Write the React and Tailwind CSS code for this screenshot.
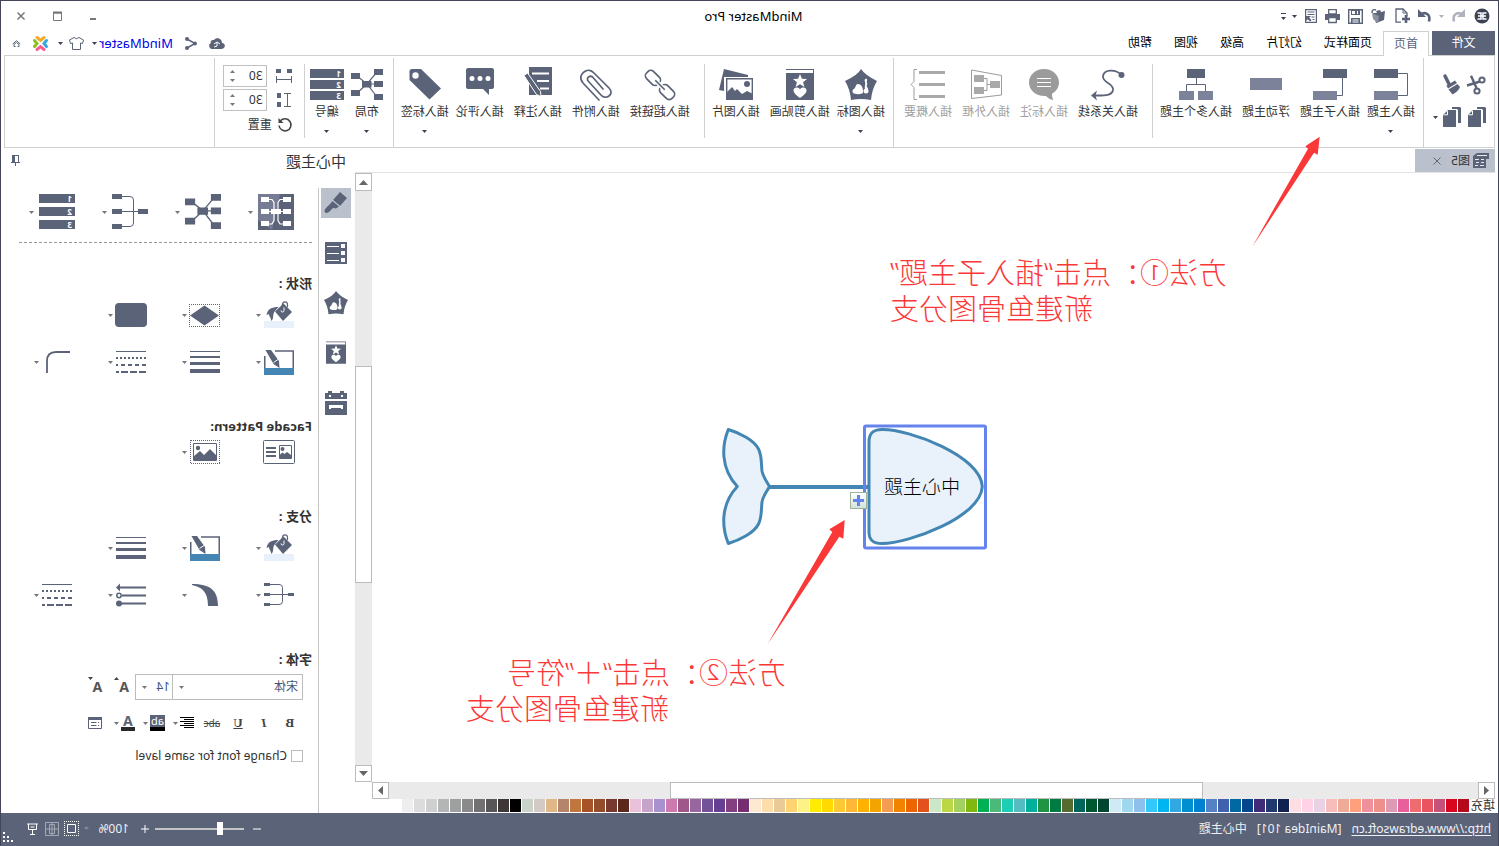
import React, { useState } from 'react';

const DARK = '#5b6378';
const LIGHT = '#7d829b';
const GRAY = '#9b9b9b';

const TABS = ['首页', '页面样式', '幻灯片', '高级', '视图', '帮助'];

const SWATCHES = [
  '#b50a1b', '#d9071d', '#c85178', '#ea5460', '#ee6b70', '#e85f9b', '#e099b5', '#ee8f8c', '#f0909c', '#ff9f7c',
  '#f0ab98', '#f6bdbb', '#ead2e6', '#ffd2e5', '#ffdee3', '#10224f', '#203a70', '#402c76', '#04468c', '#0068a2',
  '#4061ad', '#5482c4', '#0080d2', '#0090d2', '#30a9e3', '#00b6f2', '#32c8fa', '#8dc0ea', '#9fd8ee', '#cfeaf5',
  '#004530', '#005830', '#00665c', '#566c2e', '#007c42', '#1f9442', '#00b09c', '#55bdc2', '#1dcdb4', '#4ab97a',
  '#00b054', '#80b810', '#a4d060', '#bcd744', '#cce6c8', '#e4511e', '#ed6500', '#f28300', '#f49b54', '#f4a400',
  '#ffb000', '#ffb835', '#fac934', '#ffd900', '#ffec00', '#fdf286', '#ffd372', '#eacb98', '#ffdcab', '#fde8d2',
  '#772e70', '#833f80', '#673f92', '#74529a', '#97669f', '#a0578a', '#cc7ab0', '#a991d0', '#c6a4c9', '#eac1db',
  '#5d291a', '#773a30', '#934d2b', '#a85228', '#c0773f', '#b4846b', '#e0b888', '#d3cac5', '#c9d3ca', '#000000',
  '#3f3737', '#585656', '#717171', '#8a8a8a', '#9ea09f', '#b4b6b5', '#cecfcf', '#dcdcdc', '#eeeeee',
];

const Svg = ({ w, h, vb, children, className = '' }) => (
  <svg
    width={w}
    height={h}
    viewBox={vb || `0 0 ${w} ${h}`}
    fill="none"
    className={`shrink-0 overflow-visible ${className}`}
    aria-hidden="true"
  >
    {children}
  </svg>
);

const Caret = ({ color = '#777777' }) => (
  <Svg w={5} h={3}><path d="M0 0h5L2.5 3z" fill={color} /></Svg>
);

/* ---------- title bar icons ---------- */

const LogoIcon = () => (
  <Svg w={16} h={16}>
    <circle cx="8" cy="8" r="7.5" fill="#3d4254" />
    <path d="M3.500 5H7v6H3.500M12.500 5H9v6h3.500M4 8h8" stroke="#fff" strokeWidth="1.5" />
  </Svg>
);
const UndoIcon = ({ color = DARK, flip }) => (
  <Svg w={14} h={14}>
    <g transform={flip ? 'translate(14 0) scale(-1 1)' : undefined}>
      <path d="M1 5.500C6 1 13 3 11 11.500" transform="translate(0 1)" stroke={color} strokeWidth="2.600" />
      <path d="M0 0v8h8z" fill={color} />
    </g>
  </Svg>
);
const NewIcon = () => (
  <Svg w={16} h={16}>
    <path d="M9 14.200h5V1H7L3 5v3.500" stroke={DARK} strokeWidth="1.300" />
    <path d="M7 1v4H3" stroke={DARK} />
    <path d="M0 11h8M4 7v8" stroke={DARK} strokeWidth="2.600" />
  </Svg>
);
const OpenIcon = () => (
  <Svg w={15} h={15}>
    <path d="M1 2l4 1 1-2 4 1-1 2 4 0-3 10-8-3z" fill={DARK} />
    <path d="M7 7l7-3-1 6-5 4z" fill="#8d92a3" />
    <path d="M10 1c3-1 4 0 4 3" stroke={DARK} strokeWidth="1.5" />
  </Svg>
);
const SaveIcon = () => (
  <Svg w={15} h={15}>
    <path d="M.7.700h13.600v13.600H.7z" stroke={DARK} strokeWidth="1.400" />
    <path d="M3 1h9v5H3zM3 9h9v6H3z" fill={DARK} />
    <path d="M5 2h1v3H5zM8 2h3v3H8zM4.500 10.500h6v1h-6zM4.500 12.500h6v1h-6z" fill="#fff" />
  </Svg>
);
const PrintIcon = () => (
  <Svg w={15} h={14}>
    <path d="M0 5h15v6H0z" fill={DARK} />
    <path d="M3.700.700h7.600V5H3.700zM3.700 8.500h7.600v5H3.700z" fill="#fff" stroke={DARK} strokeWidth="1.300" />
  </Svg>
);
const ExportIcon = () => (
  <Svg w={12} h={14}>
    <path d="M.6.600h10.800v12.800H.6z" stroke={DARK} strokeWidth="1.200" />
    <path d="M2.500 3h7M2.500 5.500h7M2.500 8h3M2.500 10.500h2" stroke={DARK} />
    <path d="M6 7h5v5l-1.700-1.700L7 12.500 5.500 11l2.300-2.300z" fill={DARK} />
  </Svg>
);

/* ---------- ribbon icons ---------- */

const ScissorsIcon = () => (
  <Svg w={20} h={20}>
    <circle cx="4" cy="5" r="2.600" stroke={DARK} strokeWidth="2" />
    <circle cx="9" cy="16" r="2.600" stroke={DARK} strokeWidth="2" />
    <path d="M6 6.500l13 4M9.500 13L15 .8" stroke={DARK} strokeWidth="2.400" />
  </Svg>
);
const BrushIcon = () => (
  <Svg w={18} h={20}>
    <path d="M16 1l-4 8" stroke={DARK} strokeWidth="3.500" strokeLinecap="round" />
    <path d="M6 5.500l8.500 5-1.500 3-9-5.500z" fill={DARK} />
    <path d="M3.500 9l9 5.500-4 5C5 18 2 15 1 12z" fill={DARK} />
  </Svg>
);
const CopyIcon = () => (
  <Svg w={18} h={20}>
    <path d="M1 0h8v2H4l-1 1v13H0V1z" fill={DARK} />
    <path d="M5 3h8l5 5v12H5z" fill={DARK} />
    <path d="M13.500 3.800v4h4" stroke="#fff" />
  </Svg>
);
const TopicIcon = () => (
  <Svg w={34} h={32}>
    <path d="M10 4.500H.5V26.500H10" stroke={DARK} />
    <path d="M10 0h24v9H10z" fill={DARK} />
    <path d="M10 22h24v9H10z" fill={LIGHT} />
  </Svg>
);
const SubtopicIcon = () => (
  <Svg w={34} h={32}>
    <path d="M4.500 9v17.500H10" stroke={DARK} />
    <path d="M0 0h24v9H0z" fill={DARK} />
    <path d="M10 22h24v9H10z" fill={LIGHT} />
  </Svg>
);
const FloatIcon = () => (
  <Svg w={32} h={32}><path d="M0 9h32v12H0z" fill={LIGHT} /></Svg>
);
const MultiIcon = () => (
  <Svg w={34} h={32}>
    <path d="M16.500 9v6.500M7.500 22v-6.500h19V22" stroke={DARK} />
    <path d="M8 0h18v9H8z" fill={DARK} />
    <path d="M0 22h15v9H0zM19 22h15v9H19z" fill={LIGHT} />
  </Svg>
);
const RelationIcon = () => (
  <Svg w={34} h={32}>
    <circle cx="3.500" cy="6" r="3" fill={DARK} />
    <path d="M3.500 6C9 0 21 0 22 7c1 7-11 7-10 14 1 6 9 5.500 18 5.500" stroke={DARK} strokeWidth="1.800" />
    <path d="M34 26.500l-6-5 1.500 5-1.500 5z" fill={DARK} />
  </Svg>
);
const CalloutIcon = () => (
  <Svg w={32} h={32}>
    <path d="M16 0C7.500 0 1 6 1 13.500c0 5 3 9 7 11.300 0 3-.5 5-1.500 6.200 3.500-.5 6-2.200 7.500-4.100 10 .6 17-5.600 17-13.400C31 6 24.500 0 16 0z" fill={GRAY} />
    <path d="M9 9.500h14M9 13.500h14M9 17.500h14" stroke="#fff" />
  </Svg>
);
const FrameIcon = () => (
  <Svg w={32} h={32}>
    <path d="M.5 6.500L30.500 1v28.500L.500 26z" stroke={GRAY} />
    <path d="M2 12h10v7H2zM18 6h10v7H18zM18 18h10v7H18z" fill="#a9a9a9" />
    <path d="M12 15.500h3M18 9.500h-3v12h3" stroke={GRAY} />
  </Svg>
);
const SummaryIcon = () => (
  <Svg w={34} h={32}>
    <path d="M0 2h26v3H0zM0 14h26v3H0zM0 26h26v3H0z" fill="#a9a9a9" />
    <path d="M28 .5h3v12l3 3-3 3v12h-3" stroke={GRAY} />
  </Svg>
);
const PentagonIcon = ({ size = 32 }) => (
  <Svg w={size} h={size} vb="0 0 32 32">
    <path d="M16 0q3 6 16 12-5 8-6 19-10-2-20 0Q5 20 0 12 12 6 16 0z" fill={DARK} />
    <path d="M14 22c0-4 2-7 5-7 2.500 0 2 3.500 4 5 2 .5 2 4 0 4.500-3 1-6 1-8 0-1.500-.7-1-1.500-1-2.500zM10 10c2-1 3 1 2 3s1 4 0 7c-1 2-3 2-3 0s2-2 1-4 1-3 0-4z" fill="#fff" />
    <circle cx="11" cy="22" r="2.500" fill="#fff" />
  </Svg>
);
const ClipartIcon = ({ w = 28, h = 32 }) => (
  <Svg w={w} h={h} vb="0 0 28 32">
    <path d="M0 0h28v1H1v3h27v27H0z" fill={DARK} />
    <path d="M14 5l1.900 4.700 5.100.3-3.900 3.200 1.300 4.800-4.400-2.700L9.600 18l1.300-4.800L7 10l5.100-.3z" fill="#fff" />
    <path d="M14 29c-4-3-6.500-5-6.500-7.500 0-3.500 5-4 6.500-1 1.500-3 6.500-2.500 6.500 1C20.500 24 18 26 14 29z" fill="#fff" />
  </Svg>
);
const PictureIcon = () => (
  <Svg w={34} h={32}>
    <path d="M29 0l5 21-5 1V8H5L5 6z" fill={DARK} />
    <path d="M.7 9.700h25.600v20.600H.7z" fill="#fff" stroke={DARK} strokeWidth="1.400" />
    <circle cx="6" cy="15" r="3" fill={DARK} />
    <path d="M0 25l6-3 5 3 5-5 2 2 3-4 6 6v7H0z" fill={DARK} />
  </Svg>
);
const LinkIcon = () => (
  <Svg w={32} h={32}>
    <g stroke={DARK} strokeWidth="1.700" transform="rotate(-45 16 16)">
      <rect x="-2" y="11" width="16" height="10" rx="4" />
      <rect x="18" y="11" width="16" height="10" rx="4" />
      <path d="M10 16h12" strokeWidth="4.500" stroke="#fff" />
      <path d="M10 16h12" strokeLinecap="round" />
    </g>
  </Svg>
);
const ClipIcon = () => (
  <Svg w={32} h={32}>
    <path
      d="M13 31L29 14c4-5 2-9-1-11-3-2.500-7-2-10 1L3 19c-3 3-2.500 6 0 8s6 1.500 8-1l12-13c2-2 2-4 .5-5s-3.500-1-5 1L9 20"
      stroke={DARK}
      strokeWidth="1.700"
      strokeLinecap="round"
    />
  </Svg>
);
const NoteIcon = () => (
  <Svg w={30} h={32}>
    <path d="M1 -2h23v28H1z" fill={DARK} />
    <path d="M4 4.500h17M4 12h12M4 19.500h9" stroke="#fff" strokeWidth="2" />
    <path d="M25.500 4l3.500 2.500-12.500 19-4.500 2 .5-5z" fill={DARK} stroke="#fff" />
  </Svg>
);
const ReviewIcon = () => (
  <Svg w={28} h={32}>
    <path d="M2-1h24c1 0 2 1 2 2v17c0 1-1 2-2 2H11l-6 6v-6H2c-1 0-2-1-2-2V1c0-1 1-2 2-2z" fill={DARK} />
    <circle cx="6" cy="9.500" r="2.500" fill="#fff" />
    <circle cx="14" cy="9.500" r="2.500" fill="#fff" />
    <circle cx="22" cy="9.500" r="2.500" fill="#fff" />
  </Svg>
);
const TagIcon = () => (
  <Svg w={32} h={32}>
    <path d="M20 0h9c1.500 0 2.500 1 2.500 2.500V11L11.500 30.500 0 19.500z" fill={DARK} />
    <circle cx="25.500" cy="6.500" r="3.200" fill="#fff" />
  </Svg>
);
const LayoutIcon = ({ size = 32 }) => (
  <Svg w={size} h={size} vb="0 0 32 32">
    <path d="M6 3l10 12L26 7M6 28l10-13 10 9M6 15h10" stroke={DARK} strokeWidth="1.200" />
    <path d="M0 0h9v6H0zM0 12h9v6H0zM0 25h9v6H0zM23 4h9v6h-9zM23 21h9v6h-9zM11.500 12h9.500v6.500h-9.500z" fill={DARK} />
  </Svg>
);
const NumberIcon = ({ w = 34, h = 32, step = 11 }) => (
  <Svg w={w} h={h}>
    {['1', '2', '3'].map((n, i) => (
      <g key={n} transform={`translate(0 ${i * step})`}>
        <path d={`M0 0h${w}v9H0z`} fill={DARK} />
        <text x="3" y="7.500" fontSize="8" fontWeight="700" fill="#fff">{n}</text>
      </g>
    ))}
  </Svg>
);
const HSpaceIcon = () => (
  <Svg w={16} h={14}>
    <path d="M0 0h5v4H0zM11 0h5v4h-5z" fill={DARK} />
    <path d="M.5 7v7M15.500 7v7M.5 10.500h15" stroke={DARK} />
  </Svg>
);
const VSpaceIcon = () => (
  <Svg w={14} h={15}>
    <path d="M10 0h4v5h-4zM10 9h4v5h-4z" fill={DARK} />
    <path d="M0 .5h7M0 13.500h7M3.500.5v13" stroke={DARK} />
  </Svg>
);

/* ---------- side panel icons ---------- */

const ThemeIcon = () => (
  <Svg w={36} h={36}>
    <path d="M0 0h36v36H0z" fill={DARK} />
    <path d="M14 0h22v26L22 36z" fill={LIGHT} opacity=".8" />
    <path d="M11 5.500l3 0 2 3v18l-2 3.500h-3M25 5.500h-3l-2 3v18l2 3.500h3M8 17.500h20" stroke="#fff" strokeWidth="1.200" />
    <path d="M3 3h8v5H3zM3 15h8v5H3zM3 27h8v5H3zM25 3h8v5h-8zM25 15h8v5h-8zM25 27h8v5h-8zM13 15h10v5H13z" fill="#fff" />
  </Svg>
);
const TreeIcon = () => (
  <Svg w={36} h={36}>
    <path d="M10 17.500h16M26 2.500h-8q-3.500 0-3.500 3.500v23q0 3.500 3.500 3.500h8" stroke={DARK} />
    <path d="M0 15h10v5H0zM26 0h10v5H26zM26 15h10v5H26zM26 30h10v5H26z" fill={DARK} />
  </Svg>
);
const FillIcon = () => (
  <Svg w={30} h={26}>
    <path d="M0 19h30v7H0z" fill="#e7f0fb" />
    <path d="M2 10L10.500 1.500 19 9.500 11 19z" fill={DARK} />
    <path d="M6.500 5V2.500c0-3.500 4.500-3.500 5-.5l.5 3" stroke={DARK} strokeWidth="1.200" />
    <path d="M10 5.500v3q0 1.500 1.500 1.500t1.500-1.500" stroke="#fff" />
    <path d="M15.500 5c7 0 11 2 12 8l-2.500-1c0 2-1.500 3-2.500 7-3-3-.5-7-3.500-10z" fill={DARK} />
  </Svg>
);
const DiamondIcon = () => (
  <Svg w={31} h={23}>
    <path d="M0 .5h31M0 22.500h31M.5 0v23M30.500 0v23" stroke={DARK} strokeDasharray="1 1" />
    <path d="M15.500 1.500L30 11.500l-14.500 10L1 11.500z" fill={DARK} />
  </Svg>
);
const RoundRectIcon = () => (
  <Svg w={32} h={24}><rect width="32" height="24" rx="4" fill={DARK} /></Svg>
);
const LineColorIcon = () => (
  <Svg w={30} h={25}>
    <path d="M.75 18V1H19M29.250 6v12" stroke={DARK} strokeWidth="1.500" />
    <path d="M0 18h30v7H0z" fill="#4585b3" />
    <path d="M23 0h5.500L20.500 14l-6 4 .5-7z" fill={DARK} />
    <path d="M16 9.500l4.500 3" stroke="#fff" />
  </Svg>
);
const WeightIcon = () => (
  <Svg w={30} h={22}>
    <path d="M0 0h30v1H0zM0 5h30v2H0zM0 11h30v3H0zM0 18h30v4H0z" fill={DARK} />
  </Svg>
);
const DashIcon = () => (
  <Svg w={30} h={22}>
    <path d="M0 .5h30" stroke={DARK} />
    <path d="M0 7h30" stroke={DARK} strokeWidth="2" strokeDasharray="2 2" />
    <path d="M0 14h30" stroke={DARK} strokeWidth="2" strokeDasharray="4 3" />
    <path d="M0 21h30" stroke={DARK} strokeWidth="2" strokeDasharray="7 2" />
  </Svg>
);
const CornerIcon = () => (
  <Svg w={30} h={22}>
    <path d="M2 1h14q9 0 9 9v12" stroke={DARK} strokeWidth="1.800" />
  </Svg>
);
const TextPicIcon = () => (
  <Svg w={32} h={24}>
    <rect x=".5" y=".5" width="31" height="23" rx="1" stroke={DARK} />
    <path d="M3.500 5.500h12v13h-12z" stroke={DARK} />
    <circle cx="12.500" cy="9" r="2" fill={DARK} />
    <path d="M4 15l4-3 2.500 2 2-1.500 3 2.500v3.500H4zM19 7h10v2H19zM19 11h10v2H19zM19 15h10v2H19z" fill={DARK} />
  </Svg>
);
const PicIcon = () => (
  <Svg w={30} h={24}>
    <path d="M0 .5h30M0 23.500h30M.5 0v24M29.500 0v24" stroke={DARK} strokeDasharray="1 1" />
    <path d="M3.500 3.500h23v17h-23z" stroke={DARK} />
    <circle cx="22" cy="8" r="2.200" fill={DARK} />
    <path d="M4 15l6-6 6 6 4-4 6 5v5H4z" fill={DARK} />
  </Svg>
);
const SmallTreeIcon = () => (
  <Svg w={30} h={24}>
    <path d="M5 11.500h20M25 1.500H15q-3.500 0-3.500 3v14q0 3 3.500 3h10" stroke={DARK} />
    <path d="M0 10h6v3H0zM24 0h6v3h-6zM24 10h6v3h-6zM24 20h6v3h-6z" fill={DARK} />
  </Svg>
);
const TaperIcon = () => (
  <Svg w={30} h={22}>
    <path d="M28 0C10 0 2 6 2 22h10C12 8 18 3 28 1z" fill={DARK} />
  </Svg>
);
const ArrowsIcon = () => (
  <Svg w={30} h={22}>
    <path d="M0 3.500h27M0 11.500h24M0 19.500h27" stroke={DARK} strokeWidth="2" />
    <path d="M30 3.500L26-.5v8z" fill={DARK} />
    <circle cx="27" cy="11.500" r="2.200" stroke={DARK} strokeWidth="1.500" />
    <circle cx="27" cy="19.500" r="3" fill={DARK} />
  </Svg>
);
const PaintbrushIcon = () => (
  <Svg w={24} h={24}>
    <path d="M8 1l7 8-7 6-7-8z" fill={DARK} />
    <path d="M9 15.500l6.500-5.500 2 2.500 4 4c4 4 1 7-2.500 4.500l-4-4-3 .5z" fill={DARK} />
    <path d="M8 15.500L15.500 9" stroke="#bbc0cd" />
  </Svg>
);
const OutlineIcon = () => (
  <Svg w={22} h={22}>
    <path d="M0 0h22v22H0z" fill={DARK} />
    <path d="M2 2h4v4H2zM2 9h4v4H2zM2 16h4v4H2zM8 4h12v1H8zM8 11h12v1H8zM8 18h12v1H8z" fill="#fff" />
  </Svg>
);
const TaskIcon = () => (
  <Svg w={22} h={22}>
    <path d="M0 1h3V-1h4v2h8v-2h4v2h3v6H0zM0 9h22v14H0z" fill={DARK} />
    <path d="M4 13h14v4h-2v-1H6v1H4z" fill="#fff" />
    <path d="M4 3h2v2H4zM16 3h2v2h-2z" fill="#fff" />
  </Svg>
);

const RibbonButton = ({ icon, label, menu, muted }) => (
  <button
    type="button"
    className={`flex flex-col items-center pt-[13px] ${menu ? 'px-[2px]' : 'px-[5px]'}`}
  >
    {/* icons are drawn a little wider than their two-character labels */}
    <span className="flex h-8 w-0 justify-center">{icon}</span>
    <span className={`mt-[3px] text-xs leading-4 whitespace-nowrap ${muted ? 'text-[#a0a0a0]' : 'text-[#333]'}`}>
      {label}
    </span>
    {menu && <span className="mt-[10px]"><Caret color="#3d4254" /></span>}
  </button>
);

const Divider = ({ full }) => (
  <div className={`w-px shrink-0 bg-[#d0d0d0] ${full ? 'mt-[2px]' : 'mt-2 mb-[9px]'}`} />
);

const Spinner = ({ id, label, value, onChange }) => (
  <div className="flex h-[22px] w-11 items-center border border-[#c0c0c0] pr-[6px] pl-[3px]">
    <input
      id={id}
      aria-label={label}
      inputMode="numeric"
      value={value}
      onChange={(e) => onChange(Number(e.target.value) || 0)}
      className="w-full min-w-0 bg-transparent text-xs text-[#333] outline-none"
    />
    <span className="flex flex-col gap-[6px]">
      <button type="button" aria-label={`${label} +`} onClick={() => onChange(value + 1)} className="rotate-180">
        <Caret />
      </button>
      <button type="button" aria-label={`${label} -`} onClick={() => onChange(value - 1)}>
        <Caret />
      </button>
    </span>
  </div>
);

const TitleBar = () => (
  <header className="grid h-[30px] grid-cols-3 items-center pr-[16px] pl-[8px]">
    <div className="flex items-center gap-[9px]">
      <LogoIcon />
      <div className="flex items-center gap-[7px]">
        <button type="button" aria-label="撤销"><UndoIcon color="#b0b3bc" /></button>
        <Caret color="#b0b3bc" />
        <button type="button" aria-label="恢复"><UndoIcon flip /></button>
      </div>
      <div className="-ml-px flex items-center gap-2">
        <button type="button" aria-label="新建"><NewIcon /></button>
        <button type="button" aria-label="打开"><OpenIcon /></button>
        <button type="button" aria-label="保存"><SaveIcon /></button>
        <button type="button" aria-label="打印"><PrintIcon /></button>
        <button type="button" aria-label="导出"><ExportIcon /></button>
        <span className="flex items-center gap-[6px]">
          <Caret color="#3d4254" />
          <Svg w={5} h={7}><path d="M0 0h5v1H0zM0 4h5L2.500 7z" fill="#3d4254" /></Svg>
        </span>
      </div>
    </div>
    <h1 className="text-center text-[13px] leading-4 text-black">MindMaster Pro</h1>
    <div className="flex items-center justify-end gap-7">
      <button type="button" aria-label="最小化"><Svg w={6} h={10}><path d="M0 7h6v2H0z" fill="#777" /></Svg></button>
      <button type="button" aria-label="最大化"><Svg w={9} h={9}><path d="M.5 1h8v7.500h-8z" stroke="#777" /><path d="M0 .5h9" stroke="#777" strokeWidth="2" /></Svg></button>
      <button type="button" aria-label="关闭"><Svg w={8} h={8}><path d="M.5.500l7 7M7.500.500l-7 7" stroke="#777" strokeWidth="1.500" /></Svg></button>
    </div>
  </header>
);

const TabRow = ({ active, onSelect }) => (
  <nav className="flex h-6 items-end px-[3px] text-xs">
    <button type="button" className="h-6 w-[63px] bg-[#5b6378] text-white">文件</button>
    <div className="ml-[3px] flex">
      {TABS.map((tab) => (
        <button
          key={tab}
          type="button"
          onClick={() => onSelect(tab)}
          className={
            tab === active
              ? 'relative z-10 -mb-px h-[25px] border border-b-0 border-[#d0d0d0] bg-white px-[10px] text-[#5b6378]'
              : 'h-6 px-[11px] text-black'
          }
        >
          {tab}
        </button>
      ))}
    </div>
    <div className="ml-auto flex h-6 items-center pr-2">
      <button type="button" aria-label="云">
        <Svg w={16} h={11}>
          <path d="M4 11C-1 11-1 5 3 5 3 0 9-1 11 2c3-.5 4 2 3 3 3 1 2 6-1 6z" fill={DARK} />
          <path d="M5 6l3-2 3 2M8 4v4l3 1" stroke="#fff" />
        </Svg>
      </button>
      <button type="button" aria-label="分享" className="ml-3">
        <Svg w={12} h={13}>
          <path d="M10 2L2 6.500l8 4.500" stroke={DARK} strokeWidth="1.500" />
          <circle cx="10" cy="2" r="2" fill={DARK} />
          <circle cx="10" cy="11" r="2" fill={DARK} />
          <circle cx="2" cy="6.500" r="2" fill={DARK} />
        </Svg>
      </button>
      <a href="#account" className="ml-3 text-[13px] leading-4 text-[#0000e6]">MindMaster</a>
      <span className="ml-[2px]"><Caret color="#3d4254" /></span>
      <button type="button" aria-label="皮肤" className="ml-2">
        <Svg w={15} h={13}>
          <path d="M5 .5Q7.500 3 10 .5L14.500 3l-1 3.500-2-.5v6.500h-8V6l-2 .5L.5 3z" stroke={DARK} />
        </Svg>
      </button>
      <span className="ml-[6px]"><Caret color="#3d4254" /></span>
      <button type="button" aria-label="社区" className="ml-[10px]">
        <Svg w={15} h={15}>
          <path d="M4 1.500l3.500 2.800L11 1.500" stroke="#f8a72b" strokeWidth="3" strokeLinecap="round" />
          <path d="M4 13.500l3.500-2.800 3.500 2.800" stroke="#f95d8f" strokeWidth="3" strokeLinecap="round" />
          <path d="M1.500 4.500l2.500 3-2.500 3" stroke="#34a9e0" strokeWidth="3" strokeLinecap="round" />
          <path d="M13.500 4.500l-2.500 3 2.500 3" stroke="#8bbf24" strokeWidth="3" strokeLinecap="round" />
        </Svg>
      </button>
      <button type="button" aria-label="收起功能区" className="ml-3">
        <Svg w={9} h={7}><path d="M.7 4L4.500.700 8.300 4M2 4.500L4.500 2.500 7 4.500v2H5.500M2 4.500v2h1.500" stroke={DARK} /></Svg>
      </button>
    </div>
  </nav>
);

const Ribbon = () => {
  const [hGap, setHGap] = useState(30);
  const [vGap, setVGap] = useState(30);

  return (
    <section className="mx-[3px] flex h-[93px] border border-[#d0d0d0]">
      <div className="grid w-[70px] grid-cols-[20px_34px] content-center gap-x-[5px] gap-y-3 pb-px pl-2">
        <button type="button" aria-label="剪切"><ScissorsIcon /></button>
        <button type="button" aria-label="格式刷"><BrushIcon /></button>
        <button type="button" aria-label="复制"><CopyIcon /></button>
        <button type="button" aria-label="粘贴" className="flex items-center gap-[5px]">
          <CopyIcon />
          <Caret color="#3d4254" />
        </button>
      </div>
      <Divider full />
      <div className="flex items-start pr-[2px] pl-[6px]">
        <RibbonButton icon={<TopicIcon />} label="插入主题" menu />
        <RibbonButton icon={<SubtopicIcon />} label="插入子主题" />
        <RibbonButton icon={<FloatIcon />} label="浮动主题" />
        <RibbonButton icon={<MultiIcon />} label="插入多个主题" />
      </div>
      <Divider />
      <div className="flex items-start pr-[5px] pl-[9px]">
        <RibbonButton icon={<RelationIcon />} label="插入关系线" />
        <RibbonButton icon={<CalloutIcon />} label="插入标注" muted />
        <RibbonButton icon={<FrameIcon />} label="插入外框" muted />
        <RibbonButton icon={<SummaryIcon />} label="插入概要" muted />
      </div>
      <Divider full />
      <div className="flex items-start pr-[2px] pl-[6px]">
        <RibbonButton icon={<PentagonIcon />} label="插入图标" menu />
        <RibbonButton icon={<ClipartIcon />} label="插入剪贴画" />
        <RibbonButton icon={<PictureIcon />} label="插入图片" />
      </div>
      <Divider />
      <div className="flex items-start pr-[5px] pl-[9px]">
        <RibbonButton icon={<LinkIcon />} label="插入超链接" />
        <RibbonButton icon={<ClipIcon />} label="插入附件" />
        <RibbonButton icon={<NoteIcon />} label="插入注释" />
        <RibbonButton icon={<ReviewIcon />} label="插入评论" />
        <RibbonButton icon={<TagIcon />} label="插入标签" menu />
      </div>
      <Divider full />
      <div className="flex items-start gap-3 pr-2 pl-3">
        <RibbonButton icon={<LayoutIcon />} label="布局" menu />
        <RibbonButton icon={<NumberIcon />} label="编号" menu />
      </div>
      <Divider />
      <div className="flex flex-col gap-[2px] pt-[9px] pr-2 pl-3">
        <div className="flex items-center gap-[9px]">
          <HSpaceIcon />
          <Spinner id="h-gap" label="水平间距" value={hGap} onChange={setHGap} />
        </div>
        <div className="flex items-center gap-[9px]">
          <span className="flex w-4 justify-center"><VSpaceIcon /></span>
          <Spinner id="v-gap" label="垂直间距" value={vGap} onChange={setVGap} />
        </div>
        <button
          type="button"
          onClick={() => { setHGap(30); setVGap(30); }}
          className="mt-1 flex items-center gap-[6px] text-xs leading-4 text-[#333]"
        >
          <Svg w={14} h={14}>
            <path d="M11.500 2.800A6 6 0 1 0 13 7.500" stroke="#444" strokeWidth="1.600" />
            <path d="M13.500 0v5h-5z" fill="#444" />
          </Svg>
          重置
        </button>
      </div>
      <Divider full />
    </section>
  );
};

const Canvas = () => (
  <main className="relative min-w-0 flex-1 bg-white">
    <svg className="pointer-events-none absolute inset-0 z-10 size-full overflow-visible" fill="none" aria-hidden="true">
      <g transform="translate(-4 -173)">
        <g stroke="#4386b3" strokeWidth="3" fill="#e9f1fb" strokeLinejoin="round">
          <path d="M630 442C630 433 626 429.500 617 429.500C590 429 518 456 516.700 486.500C518 517 590 543.500 617 543.500C626 543.500 630 540 630 532z" />
          <path d="M729.500 486.500C733 480 736 477 737 471C738 462 737 456 740.500 449C745 440 759 433 770.700 429.500C777 445 779 468 761.700 486.500C779 505 777 528 770.700 543.500C759 540 745 533 740.500 524C737 517 738 511 737 502C736 496 733 493 729.500 486.500z" />
          <path d="M631 487h99" strokeWidth="4" />
        </g>
        <rect x="513.500" y="426" width="121" height="122" rx="1.500" stroke="#6583ec" strokeWidth="3" />
        <path d="M179.300 136.700L193.700 146.300 191 148.700 246.700 246.700 185 152.700 181.300 154.700z" fill="#fb3838" />
        <path d="M654.300 520L669.700 529.300 666.700 532 731.300 644 659.700 536.700 655.700 538.700z" fill="#fb3838" />
      </g>
    </svg>
    <span className="absolute top-[302px] left-[535px] z-20 text-[19px] leading-6 font-light text-black">中心主题</span>
    <button
      type="button"
      aria-label="添加子主题"
      className="absolute top-[319px] left-[628px] z-20 flex size-[17px] items-center justify-center border border-[#9db39d] bg-linear-to-b from-white to-[#d3e3d6]"
    >
      <Svg w={11} h={11}><path d="M0 5.500h11M5.500 0v11" stroke="#6583ec" strokeWidth="3" /></Svg>
    </button>
    <div className="absolute top-[82px] left-[268px] text-[29px] leading-9 font-light whitespace-nowrap text-[#fb3838]">
      <p>方法①：点击“插入子主题”</p>
      <p className="pl-[134px]">新建鱼骨图分支</p>
    </div>
    <div className="absolute top-[482px] left-[709px] text-[29px] leading-9 font-light whitespace-nowrap text-[#fb3838]">
      <p>方法②：点击“＋”符号</p>
      <p className="pl-[117px]">新建鱼骨图分支</p>
    </div>
  </main>
);

const VerticalScroll = () => (
  <div className="flex w-[17px] shrink-0 flex-col bg-[#eaeaea]">
    <button type="button" aria-label="向上滚动" className="flex h-[18px] items-center justify-center border border-[#bcbcbc] bg-white">
      <Svg w={9} h={5}><path d="M0 5L4.500 0 9 5z" fill="#666" /></Svg>
    </button>
    <div className="flex-[176]" />
    <div className="flex-[217] border border-[#bcbcbc] bg-white" />
    <div className="flex-[183]" />
    <button type="button" aria-label="向下滚动" className="flex h-[17px] items-center justify-center border border-[#bcbcbc] bg-white">
      <Svg w={9} h={5}><path d="M0 0h9L4.500 5z" fill="#666" /></Svg>
    </button>
  </div>
);

const HorizontalScroll = () => (
  <div className="mr-[17px] flex h-[17px] shrink-0 bg-[#eaeaea]">
    <button type="button" aria-label="向左滚动" className="flex w-[17px] items-center justify-center border border-[#bcbcbc] bg-white">
      <Svg w={5} h={9}><path d="M5 0v9L0 4.500z" fill="#666" /></Svg>
    </button>
    <div className="flex-[275]" />
    <div className="flex-[532] border border-[#bcbcbc] bg-white" />
    <div className="flex-[282]" />
    <button type="button" aria-label="向右滚动" className="flex w-[17px] items-center justify-center border border-[#bcbcbc] bg-white">
      <Svg w={5} h={9}><path d="M0 0v9l5-4.500z" fill="#666" /></Svg>
    </button>
  </div>
);

const IconRow = ({ children, className = '' }) => (
  <div className={`flex h-[26px] items-center pl-[18px] ${className}`}>{children}</div>
);

const Tool = ({ icon, label, menu = true, wide }) => (
  <button
    type="button"
    aria-label={label}
    className={`flex shrink-0 items-center ${wide ? 'w-[73px] gap-[5px]' : 'w-[74px] gap-[3px]'}`}
  >
    <span className={`flex justify-center ${wide ? 'w-9' : 'w-[30px]'}`}>{icon}</span>
    {menu && <Caret />}
  </button>
);

const Heading = ({ children, className = '' }) => (
  <h3 className={`text-[13px] leading-4 font-bold text-[#333] ${className}`}>{children}</h3>
);

const SidePanel = () => {
  const [sameLevel, setSameLevel] = useState(false);

  return (
    <aside className="flex w-[354px] shrink-0 flex-col">
      <div className="flex h-[25px] items-center justify-between pr-[10px] pl-[9px]">
        <h2 className="text-[15px] leading-5 text-[#333]">中心主题</h2>
        <button type="button" aria-label="固定">
          <Svg w={9} h={11}>
            <path d="M1.500.500h6v7h-6M0 7.500h9M4.500 8v3" stroke={DARK} />
            <path d="M5 0h3v8H5zM1 0h1v8H1z" fill={DARK} />
          </Svg>
        </button>
      </div>
      <div className="flex flex-1">
        <div className="flex w-9 flex-col items-center gap-5 pt-[15px] pl-[2px]">
          <button type="button" aria-label="格式" className="flex size-[30px] items-center justify-center bg-[#bbc0cd]"><PaintbrushIcon /></button>
          <button type="button" aria-label="大纲" className="flex size-[30px] items-center justify-center"><OutlineIcon /></button>
          <button type="button" aria-label="图标" className="flex size-[30px] items-center justify-center"><PentagonIcon size={24} /></button>
          <button type="button" aria-label="剪贴画" className="flex size-[30px] items-center justify-center"><ClipartIcon w={20} h={24} /></button>
          <button type="button" aria-label="任务" className="flex size-[30px] items-center justify-center"><TaskIcon /></button>
        </div>
        <div className="mt-[15px] w-px bg-[#c4c4c4]" />
        <div className="min-w-0 flex-1 pt-[21px] pr-[18px] pl-[6px]">
          <div className="flex pl-[18px]">
            <Tool wide icon={<ThemeIcon />} label="主题" />
            <Tool wide icon={<LayoutIcon size={36} />} label="布局" />
            <Tool wide icon={<TreeIcon />} label="连接线" />
            <Tool wide icon={<NumberIcon w={36} h={36} step={13} />} label="编号" />
          </div>
          <div className="mt-3 border-t border-dashed border-[#999]" />

          <Heading className="mt-8">形状 :</Heading>
          <IconRow className="mt-[11px]">
            <Tool icon={<FillIcon />} label="填充颜色" />
            <Tool icon={<DiamondIcon />} label="形状" />
            <Tool icon={<RoundRectIcon />} label="圆角" />
          </IconRow>
          <IconRow className="mt-[21px]">
            <Tool icon={<LineColorIcon />} label="线条颜色" />
            <Tool icon={<WeightIcon />} label="线条粗细" />
            <Tool icon={<DashIcon />} label="虚线" />
            <Tool icon={<CornerIcon />} label="转角" />
          </IconRow>

          <Heading className="mt-[43px]">Facade Pattern:</Heading>
          <IconRow className="mt-[5px]">
            <Tool icon={<TextPicIcon />} label="图文" menu={false} />
            <Tool icon={<PicIcon />} label="图片" />
          </IconRow>

          <Heading className="mt-[43px]">分支 :</Heading>
          <IconRow className="mt-[11px]">
            <Tool icon={<FillIcon />} label="分支填充" />
            <Tool icon={<LineColorIcon />} label="分支颜色" />
            <Tool icon={<WeightIcon />} label="分支粗细" />
          </IconRow>
          <IconRow className="mt-[21px]">
            <Tool icon={<SmallTreeIcon />} label="分支样式" />
            <Tool icon={<TaperIcon />} label="渐细" />
            <Tool icon={<ArrowsIcon />} label="箭头" />
            <Tool icon={<DashIcon />} label="分支虚线" />
          </IconRow>

          <Heading className="mt-[43px]">字体 :</Heading>
          <div className="mt-[7px] flex items-center pl-[9px]">
            <div className="grid h-[26px] w-[131px] items-center border border-[#bcbcbc]">
              <select aria-label="字体" className="col-start-1 row-start-1 h-full appearance-none pl-1 text-xs text-[#4a5570] outline-none">
                <option>宋体</option>
              </select>
              <span className="pointer-events-none col-start-1 row-start-1 mr-[6px] justify-self-end"><Caret /></span>
            </div>
            <div className="-ml-px grid h-[26px] w-[38px] items-center border border-[#bcbcbc]">
              <select aria-label="字号" className="col-start-1 row-start-1 h-full appearance-none pl-[2px] text-xs text-[#3b5680] outline-none">
                <option>14</option>
              </select>
              <span className="pointer-events-none col-start-1 row-start-1 mr-[6px] justify-self-end"><Caret /></span>
            </div>
            <button type="button" aria-label="增大字号" className="ml-[6px] flex items-start text-sm leading-4 font-bold text-[#555]">
              A<span className="-mt-[2px] rotate-180"><Caret color="#444" /></span>
            </button>
            <button type="button" aria-label="减小字号" className="ml-3 flex items-start text-sm leading-4 font-bold text-[#555]">
              A<span className="-mt-[2px]"><Caret color="#444" /></span>
            </button>
          </div>
          <div className="mt-[13px] flex h-5 items-center pl-[9px] font-['Liberation_Serif',serif] text-sm leading-4 text-[#444]">
            <button type="button" aria-label="加粗" className="w-[26px] text-center text-[13px] font-bold">B</button>
            <button type="button" aria-label="斜体" className="w-[26px] text-center text-[13px] font-bold italic">I</button>
            <button type="button" aria-label="下划线" className="w-[26px] text-center text-[13px] font-bold underline">U</button>
            <button type="button" aria-label="删除线" className="w-[26px] text-center font-['Noto_Sans',sans-serif] text-[10px] line-through">abc</button>
            <button type="button" aria-label="对齐" className="ml-[5px] flex items-center gap-[2px]">
              <Svg w={14} h={12}><path d="M0 .5h14M0 2.500h10M0 4.500h14M0 6.500h10M0 8.500h14M0 10.500h10" stroke="#000" /></Svg>
              <Caret />
            </button>
            <button type="button" aria-label="突出显示" className="ml-2 flex items-center gap-[2px] font-['Noto_Sans',sans-serif]">
              <span className="flex h-4 w-[15px] items-center justify-center border-b-4 border-black bg-[#5b6378] text-[11px] leading-3 text-white">ab</span>
              <Caret />
            </button>
            <button type="button" aria-label="字体颜色" className="ml-2 flex items-center gap-[2px] font-['Noto_Sans',sans-serif]">
              <span className="flex h-4 w-[14px] items-center justify-center border-b-4 border-[#2b2b2b] text-sm leading-3 font-bold text-[#5b6378]">A</span>
              <Caret />
            </button>
            <button type="button" aria-label="字体设置" className="ml-3">
              <Svg w={14} h={12}>
                <path d="M.5.500h13v11H.5z" stroke={DARK} />
                <path d="M0 0h14v3H0zM3 5h1v1H3zM3 8h1v1H3zM5.500 5H11v1H5.500zM5.500 8H11v1H5.500z" fill={DARK} />
              </Svg>
            </button>
          </div>
          <label className="mt-[15px] flex items-center gap-1 pl-[9px] text-xs leading-4 text-[#333]">
            <input
              type="checkbox"
              checked={sameLevel}
              onChange={(e) => setSameLevel(e.target.checked)}
              className="size-3 appearance-none border border-[#bcbcbc] bg-white checked:bg-[#5b6378]"
            />
            Change font for same lavel
          </label>
        </div>
      </div>
    </aside>
  );
};

const StatusBar = () => {
  const [zoom, setZoom] = useState(100);

  return (
    <footer className="flex h-[33px] shrink-0 items-center bg-[#5b6378] pr-[2px] pb-[2px] pl-[7px] text-xs leading-4 text-[#eef0f5]">
      <a href="http://www.edrawsoft.cn" className="underline underline-offset-2">http://www.edrawsoft.cn</a>
      <span className="ml-[10px]">[MainIdea 101]</span>
      <span className="ml-[10px]">中心主题</span>
      <div className="ml-auto flex items-center">
        <button type="button" aria-label="缩小"><Svg w={8} h={8}><path d="M0 4h8" stroke="#fff" /></Svg></button>
        <input
          type="range"
          aria-label="缩放"
          min="0"
          max="400"
          value={zoom}
          onChange={(e) => setZoom(Number(e.target.value))}
          className="mr-[6px] ml-[9px] h-[14px] w-[89px] appearance-none bg-transparent [&::-webkit-slider-runnable-track]:h-[2px] [&::-webkit-slider-runnable-track]:bg-[#c4c4c4] [&::-webkit-slider-thumb]:-mt-[6px] [&::-webkit-slider-thumb]:h-[13px] [&::-webkit-slider-thumb]:w-[6px] [&::-webkit-slider-thumb]:appearance-none [&::-webkit-slider-thumb]:bg-white"
        />
        <button type="button" aria-label="放大"><Svg w={8} h={8}><path d="M0 4h8M4 0v8" stroke="#fff" /></Svg></button>
        <span className="ml-3 w-8">{zoom}%</span>
        <span className="ml-2"><Caret color="#858b9c" /></span>
        <button type="button" aria-label="适应窗口" className="ml-[5px]">
          <Svg w={15} h={15}>
            <path d="M0 .5h15M0 14.500h15M.5 0v15M14.500 0v15" stroke="#fff" strokeDasharray="1 1" />
            <path d="M3.500 3.500h8v8h-8z" stroke="#fff" />
          </Svg>
        </button>
        <button type="button" aria-label="适应页面" className="ml-[5px]">
          <Svg w={14} h={14}><path d="M.5.500h13v13H.5zM4.500 2.500h5v9h-5zM0 7h14M7 0v14" stroke="#a3a8b6" /></Svg>
        </button>
        <button type="button" aria-label="演示" className="ml-[7px]">
          <Svg w={11} h={12}><path d="M0 1h11M1.500 1v5.500h8V1M3.500 4h4M5.500 7v4M3 11.500h5" stroke="#fff" /></Svg>
        </button>
        <span className="mt-4 ml-[14px]">
          <Svg w={10} h={10}><path d="M8 0h2v2H8zM8 4h2v2H8zM4 4h2v2H4zM8 8h2v2H8zM4 8h2v2H4zM0 8h2v2H0z" fill="#fff" /></Svg>
        </span>
      </div>
    </footer>
  );
};

const App = () => {
  const [tab, setTab] = useState('首页');

  return (
    <div className="flex h-screen min-h-[720px] -scale-x-100 flex-col border-x border-t border-[#43465a] bg-white font-['Noto_Sans','Noto_Sans_CJK_SC',sans-serif] text-[#333]">
      <TitleBar />
      <TabRow active={tab} onSelect={setTab} />
      <Ribbon />
      <div className="flex min-h-0 flex-1">
        <div className="flex min-w-0 flex-1 flex-col pl-[3px]">
          <div className="flex h-[25px] border-b border-[#e2e2e2]">
            <div className="mt-px flex h-[23px] w-20 items-center bg-[#bbc0cd] pl-[6px] text-xs">
              <Svg w={16} h={15}>
                <path d="M0 0h12l4 3v12H3V6H0z" fill={DARK} />
                <path d="M2 2.500h10M5 6.500h3M10 6.500h4M5 9.500h3M10 9.500h3M5 12.500h4M11 12.500h3" stroke="#e7e9ee" />
              </Svg>
              <span className="ml-[3px]">图5</span>
              <button type="button" aria-label="关闭图5" className="ml-[10px]">
                <Svg w={8} h={8}><path d="M.5.500l7 7M7.500.500l-7 7" stroke="#666" /></Svg>
              </button>
            </div>
          </div>
          <div className="flex min-h-0 flex-1">
            <Canvas />
            <VerticalScroll />
          </div>
          <HorizontalScroll />
          <div className="flex h-[14px] shrink-0 items-start text-xs leading-[14px]">
            <span className="mr-[2px] shrink-0">填充</span>
            {SWATCHES.map((c) => (
              <button
                key={c}
                type="button"
                aria-label={c}
                className="mr-px h-[13px] w-[11px] shrink-0"
                style={{ backgroundColor: c }}
              />
            ))}
          </div>
        </div>
        <SidePanel />
      </div>
      <StatusBar />
    </div>
  );
};

export default App;
